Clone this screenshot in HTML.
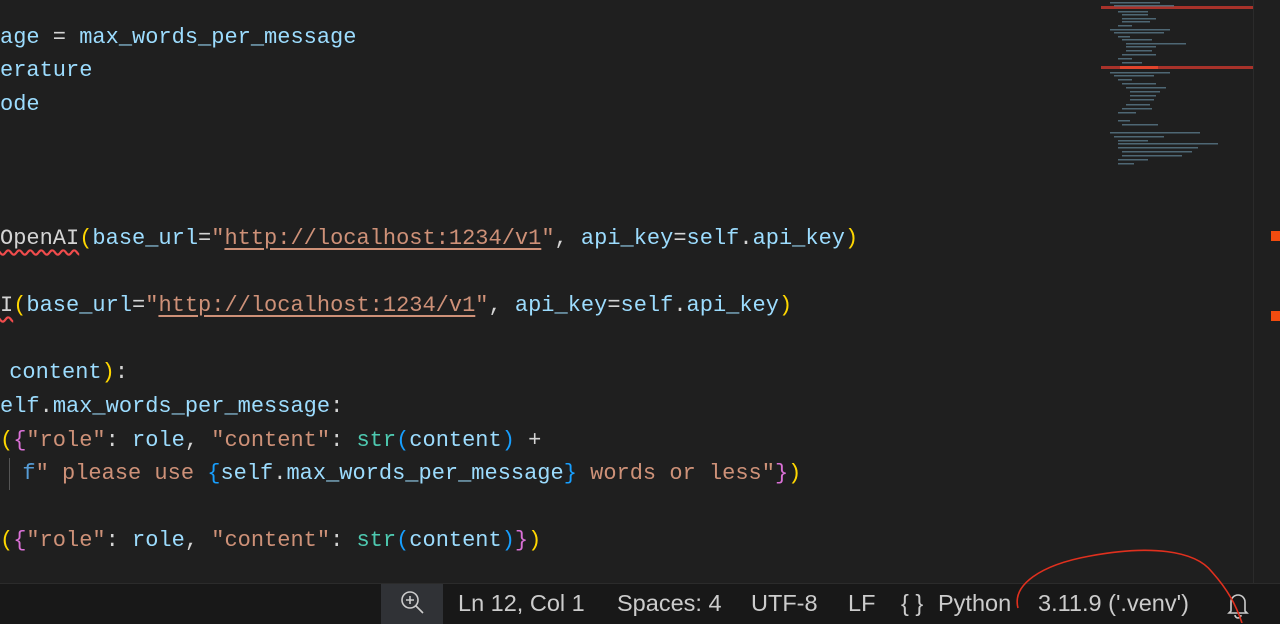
<!DOCTYPE html>
<html><head><meta charset="utf-8"><style>
body{margin:0;width:1280px;height:623px;background:#1f1f1f;overflow:hidden;position:relative;font-family:"Liberation Mono",monospace}
.l{position:absolute;left:0;font-size:22px;white-space:pre;color:#d4d4d4;line-height:30px;height:30px}
.v{color:#9cdcfe}.s{color:#ce9178}.y{color:#ffd700}.p{color:#da70d6}.b{color:#179fff}.t{color:#4ec9b0}.k{color:#569cd6}
.u{text-decoration:underline;text-decoration-color:#ce9178;text-underline-offset:4px}
.sq{text-decoration:underline wavy #f14c4c;text-underline-offset:5px}
#sb{position:absolute;left:0;top:583px;width:1280px;height:40px;background:#181818;border-top:1px solid #2b2b2b;font-family:"Liberation Sans",sans-serif;font-size:23.5px;color:#cccccc}
#sb span{position:absolute;top:6px;white-space:nowrap}
</style></head><body>
<div class="l" style="top:23px"><span class="v">age</span> = <span class="v">max_words_per_message</span></div>
<div class="l" style="top:56px"><span class="v">erature</span></div>
<div class="l" style="top:90px"><span class="v">ode</span></div>
<div class="l" style="top:224px"><span class="sq">OpenAI</span><span class="y">(</span><span class="v">base_url</span>=<span class="s">"<span class="u">http://localhost:1234/v1</span>"</span>, <span class="v">api_key</span>=<span class="v">self</span>.<span class="v">api_key</span><span class="y">)</span></div>
<div class="l" style="top:291px"><span class="sq">I</span><span class="y">(</span><span class="v">base_url</span>=<span class="s">"<span class="u">http://localhost:1234/v1</span>"</span>, <span class="v">api_key</span>=<span class="v">self</span>.<span class="v">api_key</span><span class="y">)</span></div>
<div class="l" style="top:358px;left:-4px"> <span class="v">content</span><span class="y">)</span>:</div>
<div class="l" style="top:392px"><span class="v">elf</span>.<span class="v">max_words_per_message</span>:</div>
<div class="l" style="top:426px"><span class="y">(</span><span class="p">{</span><span class="s">"role"</span>: <span class="v">role</span>, <span class="s">"content"</span>: <span class="t">str</span><span class="b">(</span><span class="v">content</span><span class="b">)</span> +</div>
<div style="position:absolute;left:9px;top:458px;width:1px;height:32px;background:#555"></div>
<div class="l" style="top:459px;left:-4px">  <span class="k">f</span><span class="s">" please use </span><span class="b">{</span><span class="v">self</span>.<span class="v">max_words_per_message</span><span class="b">}</span><span class="s"> words or less"</span><span class="p">}</span><span class="y">)</span></div>
<div class="l" style="top:526px"><span class="y">(</span><span class="p">{</span><span class="s">"role"</span>: <span class="v">role</span>, <span class="s">"content"</span>: <span class="t">str</span><span class="b">(</span><span class="v">content</span><span class="b">)</span><span class="p">}</span><span class="y">)</span></div>

<svg style="position:absolute;left:1100px;top:0" width="180" height="583">
<rect x="1" y="6" width="153" height="3" fill="#a8322a"/>
<rect x="1" y="66" width="153" height="3" fill="#a8322a"/>
<rect x="20" y="66" width="38" height="3" fill="#e0442c"/>
<g fill="#5a7a8a" opacity="0.8">
<rect x="10" y="2" width="50" height="1.5"/><rect x="14" y="5" width="60" height="1.5"/><rect x="18" y="11" width="30" height="1.5"/><rect x="22" y="14" width="26" height="1.5"/><rect x="22" y="18" width="34" height="1.5"/><rect x="22" y="21" width="28" height="1.5"/><rect x="18" y="25" width="14" height="1.5"/>
<rect x="10" y="29" width="60" height="1.5"/><rect x="14" y="32" width="50" height="1.5"/><rect x="18" y="36" width="12" height="1.5"/><rect x="22" y="39" width="30" height="1.5"/><rect x="26" y="43" width="60" height="1.5"/><rect x="26" y="46" width="30" height="1.5"/><rect x="26" y="50" width="26" height="1.5"/><rect x="22" y="54" width="34" height="1.5"/><rect x="18" y="58" width="14" height="1.5"/><rect x="22" y="62" width="20" height="1.5"/>
<rect x="10" y="72" width="60" height="1.5"/><rect x="14" y="75" width="40" height="1.5"/><rect x="18" y="79" width="14" height="1.5"/><rect x="22" y="83" width="34" height="1.5"/><rect x="26" y="87" width="40" height="1.5"/><rect x="30" y="91" width="30" height="1.5"/><rect x="30" y="95" width="26" height="1.5"/><rect x="30" y="99" width="24" height="1.5"/><rect x="26" y="104" width="24" height="1.5"/><rect x="22" y="108" width="30" height="1.5"/><rect x="18" y="112" width="18" height="1.5"/><rect x="18" y="120" width="12" height="1.5"/><rect x="22" y="124" width="36" height="1.5"/>
<rect x="10" y="132" width="90" height="1.5"/><rect x="14" y="136" width="50" height="1.5"/><rect x="18" y="140" width="30" height="1.5"/><rect x="18" y="143" width="100" height="1.5"/><rect x="18" y="147" width="80" height="1.5"/><rect x="22" y="151" width="70" height="1.5"/><rect x="22" y="155" width="60" height="1.5"/><rect x="18" y="159" width="30" height="1.5"/><rect x="18" y="163" width="16" height="1.5"/>
</g>
<rect x="153" y="0" width="1" height="583" fill="#2b2b2b"/>
<rect x="171" y="231" width="9" height="10" fill="#f24c0f"/>
<rect x="171" y="311" width="9" height="10" fill="#f24c0f"/>
</svg>

<div id="sb">
<div style="position:absolute;left:381px;top:0;width:62px;height:40px;background:#303236"></div>
<svg style="position:absolute;left:399px;top:5px" width="28" height="28" viewBox="0 0 28 28" fill="none" stroke="#cccccc" stroke-width="1.6"><circle cx="11" cy="11" r="8"/><path d="M11 7v8M7 11h8M17 17l7 7"/></svg>
<span style="left:458px">Ln 12, Col 1</span>
<span style="left:617px">Spaces: 4</span>
<span style="left:751px">UTF-8</span>
<span style="left:848px">LF</span>
<span style="left:901px">{ }</span>
<span style="left:938px">Python</span>
<span style="left:1038px">3.11.9 ('.venv')</span>
<svg style="position:absolute;left:1226px;top:6px" width="24" height="30" viewBox="0 0 24 30" fill="none" stroke="#cccccc" stroke-width="1.6"><path d="M5 21V12a7 7 0 0 1 14 0v9l2 2H3z M9 25a3 3 0 0 0 6 0"/></svg>
</div>
<svg style="position:absolute;left:0;top:0" width="1280" height="623" fill="none"><path d="M1018 608 C1012 585 1040 565 1090 556 C1150 545 1195 550 1212 572 C1228 590 1236 605 1242 623" stroke="#e0301e" stroke-width="1.6"/></svg>
</body></html>
